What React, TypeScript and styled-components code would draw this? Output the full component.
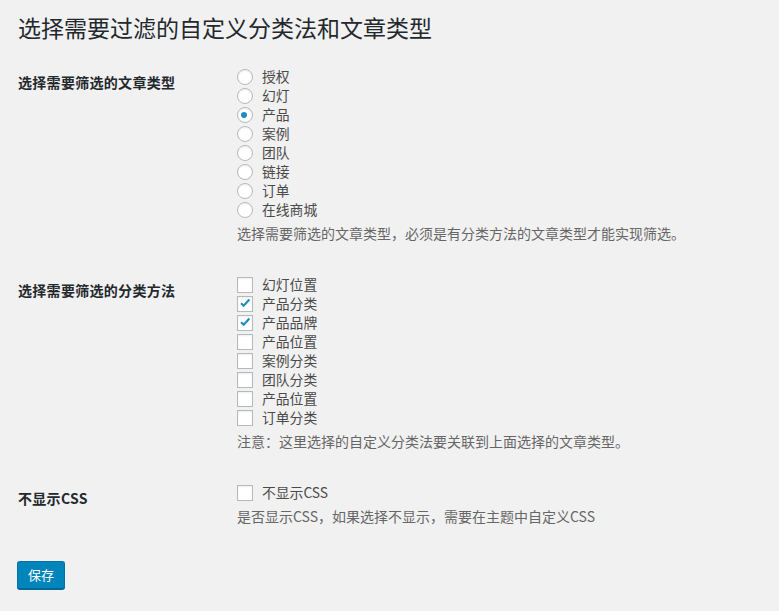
import React from "react";
import styled, { createGlobalStyle } from "styled-components";

const GlobalStyle = createGlobalStyle`
  html, body {
    margin: 0;
    padding: 0;
    background: #f1f1f1;
  }
  body {
    font-family: "Noto Sans CJK SC", "Noto Sans", sans-serif;
    color: #444;
  }
`;

const Page = styled.div`
  min-height: 100vh;
  box-sizing: border-box;
  padding: 12px 18px 0 18px;
`;

const Title = styled.div`
  margin: 0 0 24px 0;
  font-size: 23px;
  line-height: 31px;
  font-weight: 400;
  letter-spacing: 0;
  color: #23282d;
`;

const Section = styled.div`
  display: flex;
  align-items: flex-start;
  margin-bottom: 32px;
  &:last-of-type {
    margin-bottom: 0;
  }
`;

const Label = styled.div`
  width: 219px;
  flex: none;
  padding-top: 6px;
  font-size: 14px;
  line-height: 19px;
  font-weight: 700;
  letter-spacing: 0.3px;
  color: #23282d;
`;

const Field = styled.div`
  display: flex;
  flex-direction: column;
`;

const Row = styled.label`
  display: flex;
  align-items: center;
  gap: 9px;
  height: 19px;
  font-size: 13.8px;
  line-height: 19px;
  color: #4a4a4a;
`;

const Radio = styled.span<{ $checked?: boolean }>`
  position: relative;
  flex: none;
  width: 16px;
  height: 16px;
  box-sizing: border-box;
  border-radius: 50%;
  border: 1px solid #b4b9be;
  background: #fff;
  box-shadow: inset 0 1px 2px rgba(0, 0, 0, 0.07);
  &::before {
    content: "";
    display: ${(p) => (p.$checked ? "block" : "none")};
    position: absolute;
    left: 3px;
    top: 4px;
    width: 6px;
    height: 6px;
    border-radius: 50%;
    background: #1e8cbe;
  }
`;

const Box = styled.span`
  position: relative;
  flex: none;
  width: 16px;
  height: 16px;
  box-sizing: border-box;
  border: 1px solid #b4b9be;
  background: #fff;
  box-shadow: inset 0 1px 2px rgba(0, 0, 0, 0.07);
  display: flex;
  align-items: center;
  justify-content: center;
`;

const Description = styled.p`
  margin: 5px 0 0 0;
  font-size: 14px;
  line-height: 19px;
  color: #666;
`;

const SaveButton = styled.button`
  margin-top: 35px;
  margin-left: -1px;
  height: 28px;
  padding: 0 10px;
  font-family: "Noto Sans CJK SC", "Noto Sans", sans-serif;
  font-size: 13px;
  line-height: 26px;
  color: #fff;
  background: #0085ba;
  border: 1px solid #0073aa;
  border-bottom-color: #006799;
  border-radius: 3px;
  box-shadow: 0 1px 0 #006799;
  cursor: pointer;
`;

const CheckMark = () => (
  <svg width="14" height="14" viewBox="0 0 14 14" style={{ marginLeft: 1, marginTop: -2 }}>
    <path
      d="M2.2 7.2 L5 10 L11.2 3.2"
      fill="none"
      stroke="#1e8cbe"
      strokeWidth="2.3"
      strokeLinecap="butt"
      strokeLinejoin="miter"
    />
  </svg>
);

const postTypes = ["授权", "幻灯", "产品", "案例", "团队", "链接", "订单", "在线商城"];
const taxonomies: { name: string; checked: boolean }[] = [
  { name: "幻灯位置", checked: false },
  { name: "产品分类", checked: true },
  { name: "产品品牌", checked: true },
  { name: "产品位置", checked: false },
  { name: "案例分类", checked: false },
  { name: "团队分类", checked: false },
  { name: "产品位置", checked: false },
  { name: "订单分类", checked: false },
];

export default function App() {
  return (
    <>
      <GlobalStyle />
      <Page>
        <Title role="heading" aria-level={1}>选择需要过滤的自定义分类法和文章类型</Title>

        <Section>
          <Label>选择需要筛选的文章类型</Label>
          <Field>
            {postTypes.map((t) => (
              <Row key={t}>
                <Radio $checked={t === "产品"} />
                {t}
              </Row>
            ))}
            <Description>选择需要筛选的文章类型，必须是有分类方法的文章类型才能实现筛选。</Description>
          </Field>
        </Section>

        <Section>
          <Label>选择需要筛选的分类方法</Label>
          <Field>
            {taxonomies.map((t, i) => (
              <Row key={i}>
                <Box>{t.checked && <CheckMark />}</Box>
                {t.name}
              </Row>
            ))}
            <Description>注意：这里选择的自定义分类法要关联到上面选择的文章类型。</Description>
          </Field>
        </Section>

        <Section>
          <Label>不显示CSS</Label>
          <Field>
            <Row>
              <Box />
              不显示CSS
            </Row>
            <Description>是否显示CSS，如果选择不显示，需要在主题中自定义CSS</Description>
          </Field>
        </Section>

        <SaveButton>保存</SaveButton>
      </Page>
    </>
  );
}
